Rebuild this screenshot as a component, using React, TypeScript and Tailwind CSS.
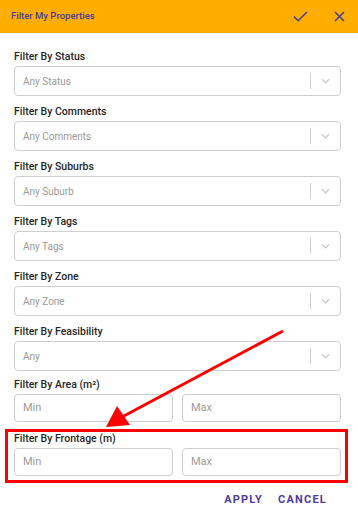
import React from "react";

const purple = "text-[#4b3c9e]";

const Chevron = () => (
  <svg className="w-[9px] h-[6px]" viewBox="0 0 10 6" fill="none">
    <path d="M1 1l4 4 4-4" stroke="#c4c4c4" strokeWidth="1.3" />
  </svg>
);

const SelectField = ({ label, placeholder }: { label: string; placeholder: string }) => (
  <div className="mb-[9px]">
    <div className="h-[14px] leading-[14px] mb-[2px] text-[10.5px] font-medium text-[#262626]">{label}</div>
    <div className="h-[30px] flex items-center border border-[#cfcfcf] rounded-[4px] bg-white">
      <span className="flex-1 pl-[8px] text-[10px] text-[#9a9a9a]">{placeholder}</span>
      <span className="w-px h-[16px] bg-[#d0d0d0]" />
      <span className="w-[29px] flex justify-center">
        <Chevron />
      </span>
    </div>
  </div>
);

const RangeInputs = () => (
  <div className="grid grid-cols-2 gap-[9px]">
    <div className="h-[28px] flex items-center border border-[#cfcfcf] rounded-[4px] pl-[8px] text-[11px] text-[#a09a98]">Min</div>
    <div className="h-[28px] flex items-center border border-[#cfcfcf] rounded-[4px] pl-[8px] text-[11px] text-[#a09a98]">Max</div>
  </div>
);

const selects = [
  ["Filter By Status", "Any Status"],
  ["Filter By Comments", "Any Comments"],
  ["Filter By Suburbs", "Any Suburb"],
  ["Filter By Tags", "Any Tags"],
  ["Filter By Zone", "Any Zone"],
  ["Filter By Feasibility", "Any"],
];

export default function App() {
  return (
    <div className="relative w-[358px] h-[517px] bg-white overflow-hidden" style={{ fontFamily: "Roboto, 'Liberation Sans', sans-serif" }}>
      {/* Header */}
      <div className="h-[33px] bg-[#ffad00] flex items-center justify-between pl-[11px] pr-[13px]">
        <span className={`text-[9.5px] font-medium ${purple}`}>Filter My Properties</span>
        <div className="flex items-center gap-[26px]">
          <svg className="w-[15px] h-[11px]" viewBox="0 0 15 11" fill="none">
            <path d="M1 5.5l4.2 4.2L14 1" stroke="#4b3c9e" strokeWidth="1.6" />
          </svg>
          <svg className="w-[11px] h-[11px]" viewBox="0 0 11 11" fill="none">
            <path d="M1 1l9 9M10 1l-9 9" stroke="#4b3c9e" strokeWidth="1.6" />
          </svg>
        </div>
      </div>

      {/* Body */}
      <div className="pl-[14px] pr-[17px] pt-[17px]">
        {selects.map(([label, placeholder]) => (
          <SelectField key={label} label={label} placeholder={placeholder} />
        ))}

        <div className="-mt-[2px]">
          <div className="h-[14px] leading-[14px] mb-[2px] text-[10.5px] font-medium text-[#262626]">Filter By Area (m²)</div>
          <RangeInputs />
        </div>

        {/* Highlighted frontage filter */}
        <div className="mt-[7px] -ml-[9px] -mr-[7px] border-[3px] border-[#ff0000] pl-[6px] pr-[4px] pb-[4px]">
          <div className="h-[14px] leading-[14px] mb-[2px] text-[10.5px] font-medium text-[#262626]">Filter By Frontage (m)</div>
          <RangeInputs />
        </div>

        <div className="flex justify-end gap-[15px] pr-[14px] pt-[9px]">
          <span className={`text-[11px] font-bold tracking-[1.2px] ${purple}`}>APPLY</span>
          <span className={`text-[11px] font-bold tracking-[1.2px] ${purple}`}>CANCEL</span>
        </div>
      </div>

      {/* Annotation arrow */}
      <svg className="absolute inset-0 pointer-events-none" width="358" height="517">
        <line x1="283" y1="331" x2="122" y2="417" stroke="#ff0000" strokeWidth="3" />
        <polygon points="106,427 117,406 130,425" fill="#ff0000" />
      </svg>
    </div>
  );
}
